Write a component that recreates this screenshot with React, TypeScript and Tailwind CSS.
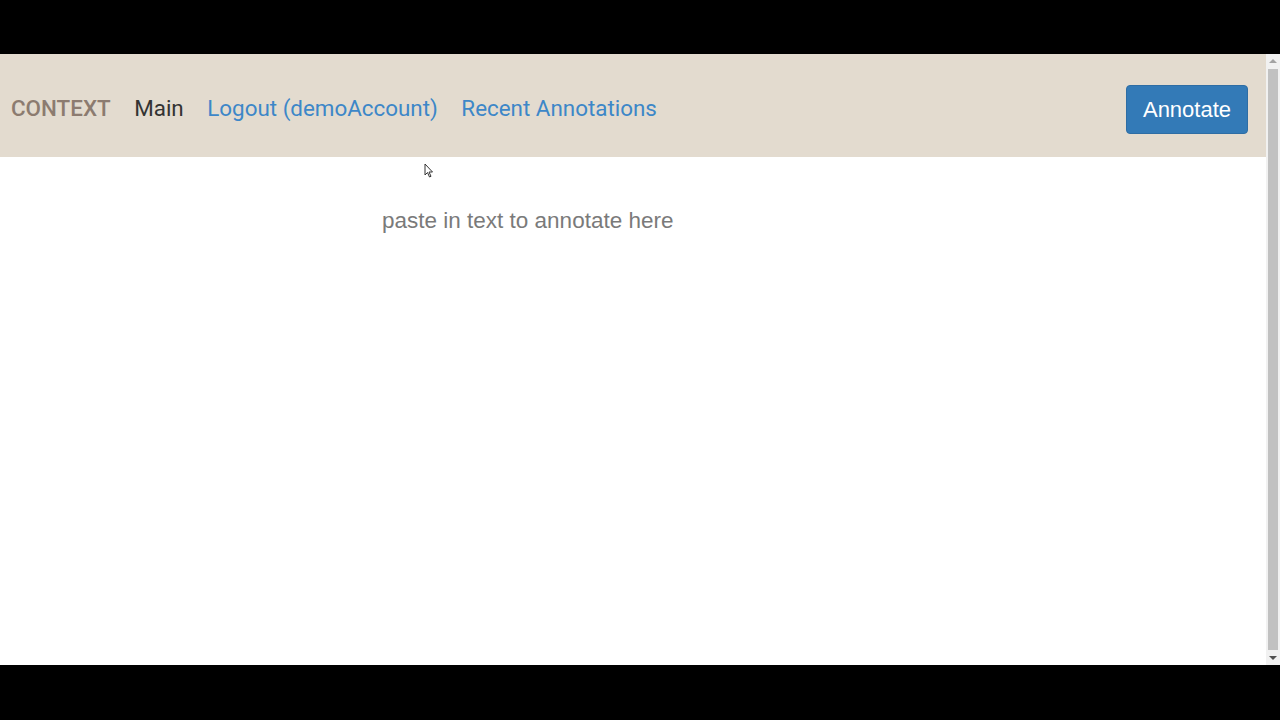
import React from "react";

export default function App() {
  return (
    <div className="w-[1280px] h-[720px] bg-black flex flex-col overflow-hidden">
      <div className="h-[54px] shrink-0 bg-black" />
      <div className="flex h-[611px] shrink-0">
        <div className="flex-1 flex flex-col bg-white">
          <header className="h-[103px] shrink-0 bg-[#e3dbcf] flex items-center pl-[11px] pr-[18px] font-['Roboto',sans-serif]">
            <nav className="flex items-center pt-[6px] text-[22.4px] leading-none">
              <span className="text-[#8c7b70] font-medium">CONTEXT</span>
              <span className="ml-[23.5px] text-[#333333]">Main</span>
              <span className="ml-[23.5px] text-[#3d87c8]">Logout (demoAccount)</span>
              <span className="ml-[23.5px] text-[#3d87c8]">Recent Annotations</span>
            </nav>
            <div className="flex-1" />
            <button className="mt-[8px] w-[122px] h-[49px] rounded-[4px] bg-[#337ab7] border border-[#2e6da4] text-white text-[22px] font-['Liberation_Sans',Arial,sans-serif]">
              Annotate
            </button>
          </header>
          <main className="flex-1 relative">
            <div className="pl-[382px] pt-[50px] text-[22.5px] leading-[27px] text-[#7a7a7a] font-['Liberation_Sans',Arial,sans-serif]">
              paste in text to annotate here
            </div>
            <svg className="absolute left-[424px] top-[6px]" width="11" height="16" viewBox="0 0 11 16">
              <path d="M1 1 L1 12 L3.5 9.5 L5.5 14 L7 13.3 L5 9 L8.5 9 Z" fill="white" stroke="#333" strokeWidth="1" />
            </svg>
          </main>
        </div>
        <div className="w-[14px] shrink-0 bg-[#f1f1f1] flex flex-col items-center">
          <div className="h-[14px] w-full flex items-center justify-center">
            <div className="w-0 h-0 border-l-[4px] border-r-[4px] border-b-[4px] border-l-transparent border-r-transparent border-b-[#a3a3a3]" />
          </div>
          <div className="flex-1 w-[10px] bg-[#c1c1c1] my-[1px]" />
          <div className="h-[14px] w-full flex items-center justify-center">
            <div className="w-0 h-0 border-l-[4px] border-r-[4px] border-t-[4px] border-l-transparent border-r-transparent border-t-[#505050]" />
          </div>
        </div>
      </div>
      <div className="flex-1 bg-black" />
    </div>
  );
}
